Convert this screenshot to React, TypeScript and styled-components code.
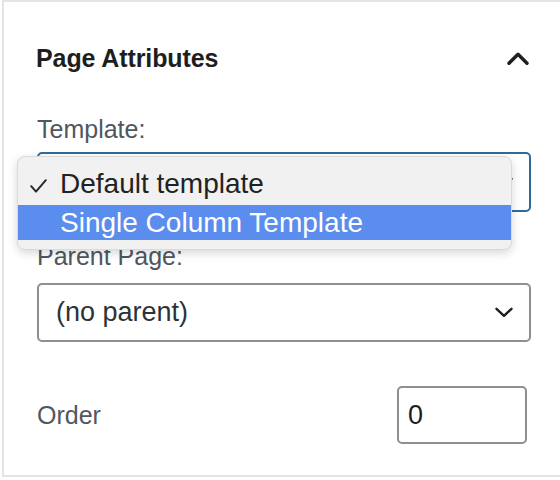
import React from 'react';
import styled, { createGlobalStyle, css } from 'styled-components';

const GlobalStyle = createGlobalStyle`
  html, body {
    margin: 0;
    padding: 0;
    background: #ffffff;
  }
  body {
    font-family: "Liberation Sans", Arial, sans-serif;
  }
`;

const ChevronUp = () => (
  <svg width="22" height="13" viewBox="0 0 22 13" fill="none">
    <path d="M2 11.2L11 2.2L20 11.2" stroke="#1e1e1e" strokeWidth="3.4" strokeLinecap="round" strokeLinejoin="round" />
  </svg>
);

const ChevronDown = () => (
  <svg width="18" height="11" viewBox="0 0 18 11" fill="none">
    <path d="M1.5 1.8L9 8.8L16.5 1.8" stroke="#1e1e1e" strokeWidth="2.4" strokeLinecap="round" strokeLinejoin="round" />
  </svg>
);

const Check = () => (
  <svg width="17" height="14" viewBox="0 0 17 14" fill="none">
    <path d="M1.2 7.2L6 12.6L15.8 1.2" stroke="#2a2a2a" strokeWidth="2" strokeLinecap="round" strokeLinejoin="round" />
  </svg>
);

const App = () => {
  return (
    <>
      <GlobalStyle />
      <Panel>
        <Header>
          <Title>Page Attributes</Title>
          <ToggleButton aria-label="Collapse">
            <ChevronUp />
          </ToggleButton>
        </Header>

        <Field>
          <Label>Template:</Label>
          <SelectWrap>
            {/* the open list covers the selected value, only the arrow tip peeks out */}
            <Select focused>
              <span />
              <ChevronDown />
            </Select>
            <Popup>
              <Option>
                <CheckSlot>
                  <Check />
                </CheckSlot>
                Default template
              </Option>
              <Option highlighted>
                <CheckSlot />
                Single Column Template
              </Option>
            </Popup>
          </SelectWrap>
        </Field>

        <Field gap={29} labelGap={12}>
          <Label>Parent Page:</Label>
          <SelectWrap>
            <Select>
              <SelectText>(no parent)</SelectText>
              <ChevronDown />
            </Select>
          </SelectWrap>
        </Field>

        <OrderRow>
          <Label as="span">Order</Label>
          <NumberInput>0</NumberInput>
        </OrderRow>
      </Panel>
    </>
  );
};

export default App;

const Panel = styled.section`
  margin-left: 2px;
  border-top: 2px solid #e4e4e4;
  border-left: 2px solid #e4e4e4;
  border-bottom: 2px solid #e4e4e4;
  padding: 0 29px 31px 33px;
  background: #ffffff;
`;

const Header = styled.div`
  display: flex;
  align-items: center;
  justify-content: space-between;
  padding-top: 41px;
  margin-left: -1px;
`;

const Title = styled.h2`
  margin: 0;
  font-size: 25px;
  line-height: 30px;
  font-weight: 700;
  color: #1e1e1e;
  letter-spacing: -0.1px;
`;

const ToggleButton = styled.button`
  display: flex;
  align-items: center;
  justify-content: center;
  padding: 0;
  margin-right: 2px;
  border: none;
  background: none;
  height: 30px;
`;

const Field = styled.div<{ gap?: number; labelGap?: number }>`
  display: flex;
  flex-direction: column;
  gap: ${({ labelGap }) => labelGap ?? 8}px;
  margin-top: ${({ gap }) => gap ?? 41}px;
`;

const Label = styled.label`
  font-size: 25px;
  line-height: 30px;
  color: #50575e;
`;

const SelectWrap = styled.div`
  position: relative;
`;

const Select = styled.div<{ focused?: boolean }>`
  box-sizing: border-box;
  height: 59px;
  display: flex;
  align-items: center;
  justify-content: space-between;
  padding: 0 16px 0 17px;
  border: 2px solid #8c8f94;
  border-radius: 5px;
  background: #ffffff;

  ${({ focused }) =>
    focused &&
    css`
      height: 60px;
      border-color: #306a9b;
    `}
`;

const SelectText = styled.span`
  font-size: 27px;
  color: #2c3338;
`;

const Popup = styled.div`
  position: absolute;
  top: 4px;
  left: -20px;
  width: 495px;
  box-sizing: border-box;
  padding: 5px 0 9px;
  background: #f1f1f1;
  border: 1px solid #dadada;
  border-radius: 8px;
  box-shadow: 0 3px 10px rgba(0, 0, 0, 0.16);
  z-index: 2;
`;

const Option = styled.div<{ highlighted?: boolean }>`
  display: flex;
  align-items: center;
  height: 43px;
  font-size: 28px;
  color: #222222;

  ${({ highlighted }) =>
    highlighted &&
    css`
      height: 35px;
      background: #5b8def;
      color: #ffffff;
    `}
`;

const CheckSlot = styled.span`
  display: flex;
  align-items: center;
  width: 30px;
  padding-left: 12px;
  padding-top: 4px;
`;

const OrderRow = styled.div`
  display: flex;
  align-items: center;
  justify-content: space-between;
  margin-top: 44px;
`;

const NumberInput = styled.div`
  box-sizing: border-box;
  width: 130px;
  height: 58px;
  margin-right: 4px;
  display: flex;
  align-items: center;
  padding-left: 9px;
  border: 2px solid #8c8f94;
  border-radius: 5px;
  font-size: 27px;
  color: #1e1e1e;
`;
